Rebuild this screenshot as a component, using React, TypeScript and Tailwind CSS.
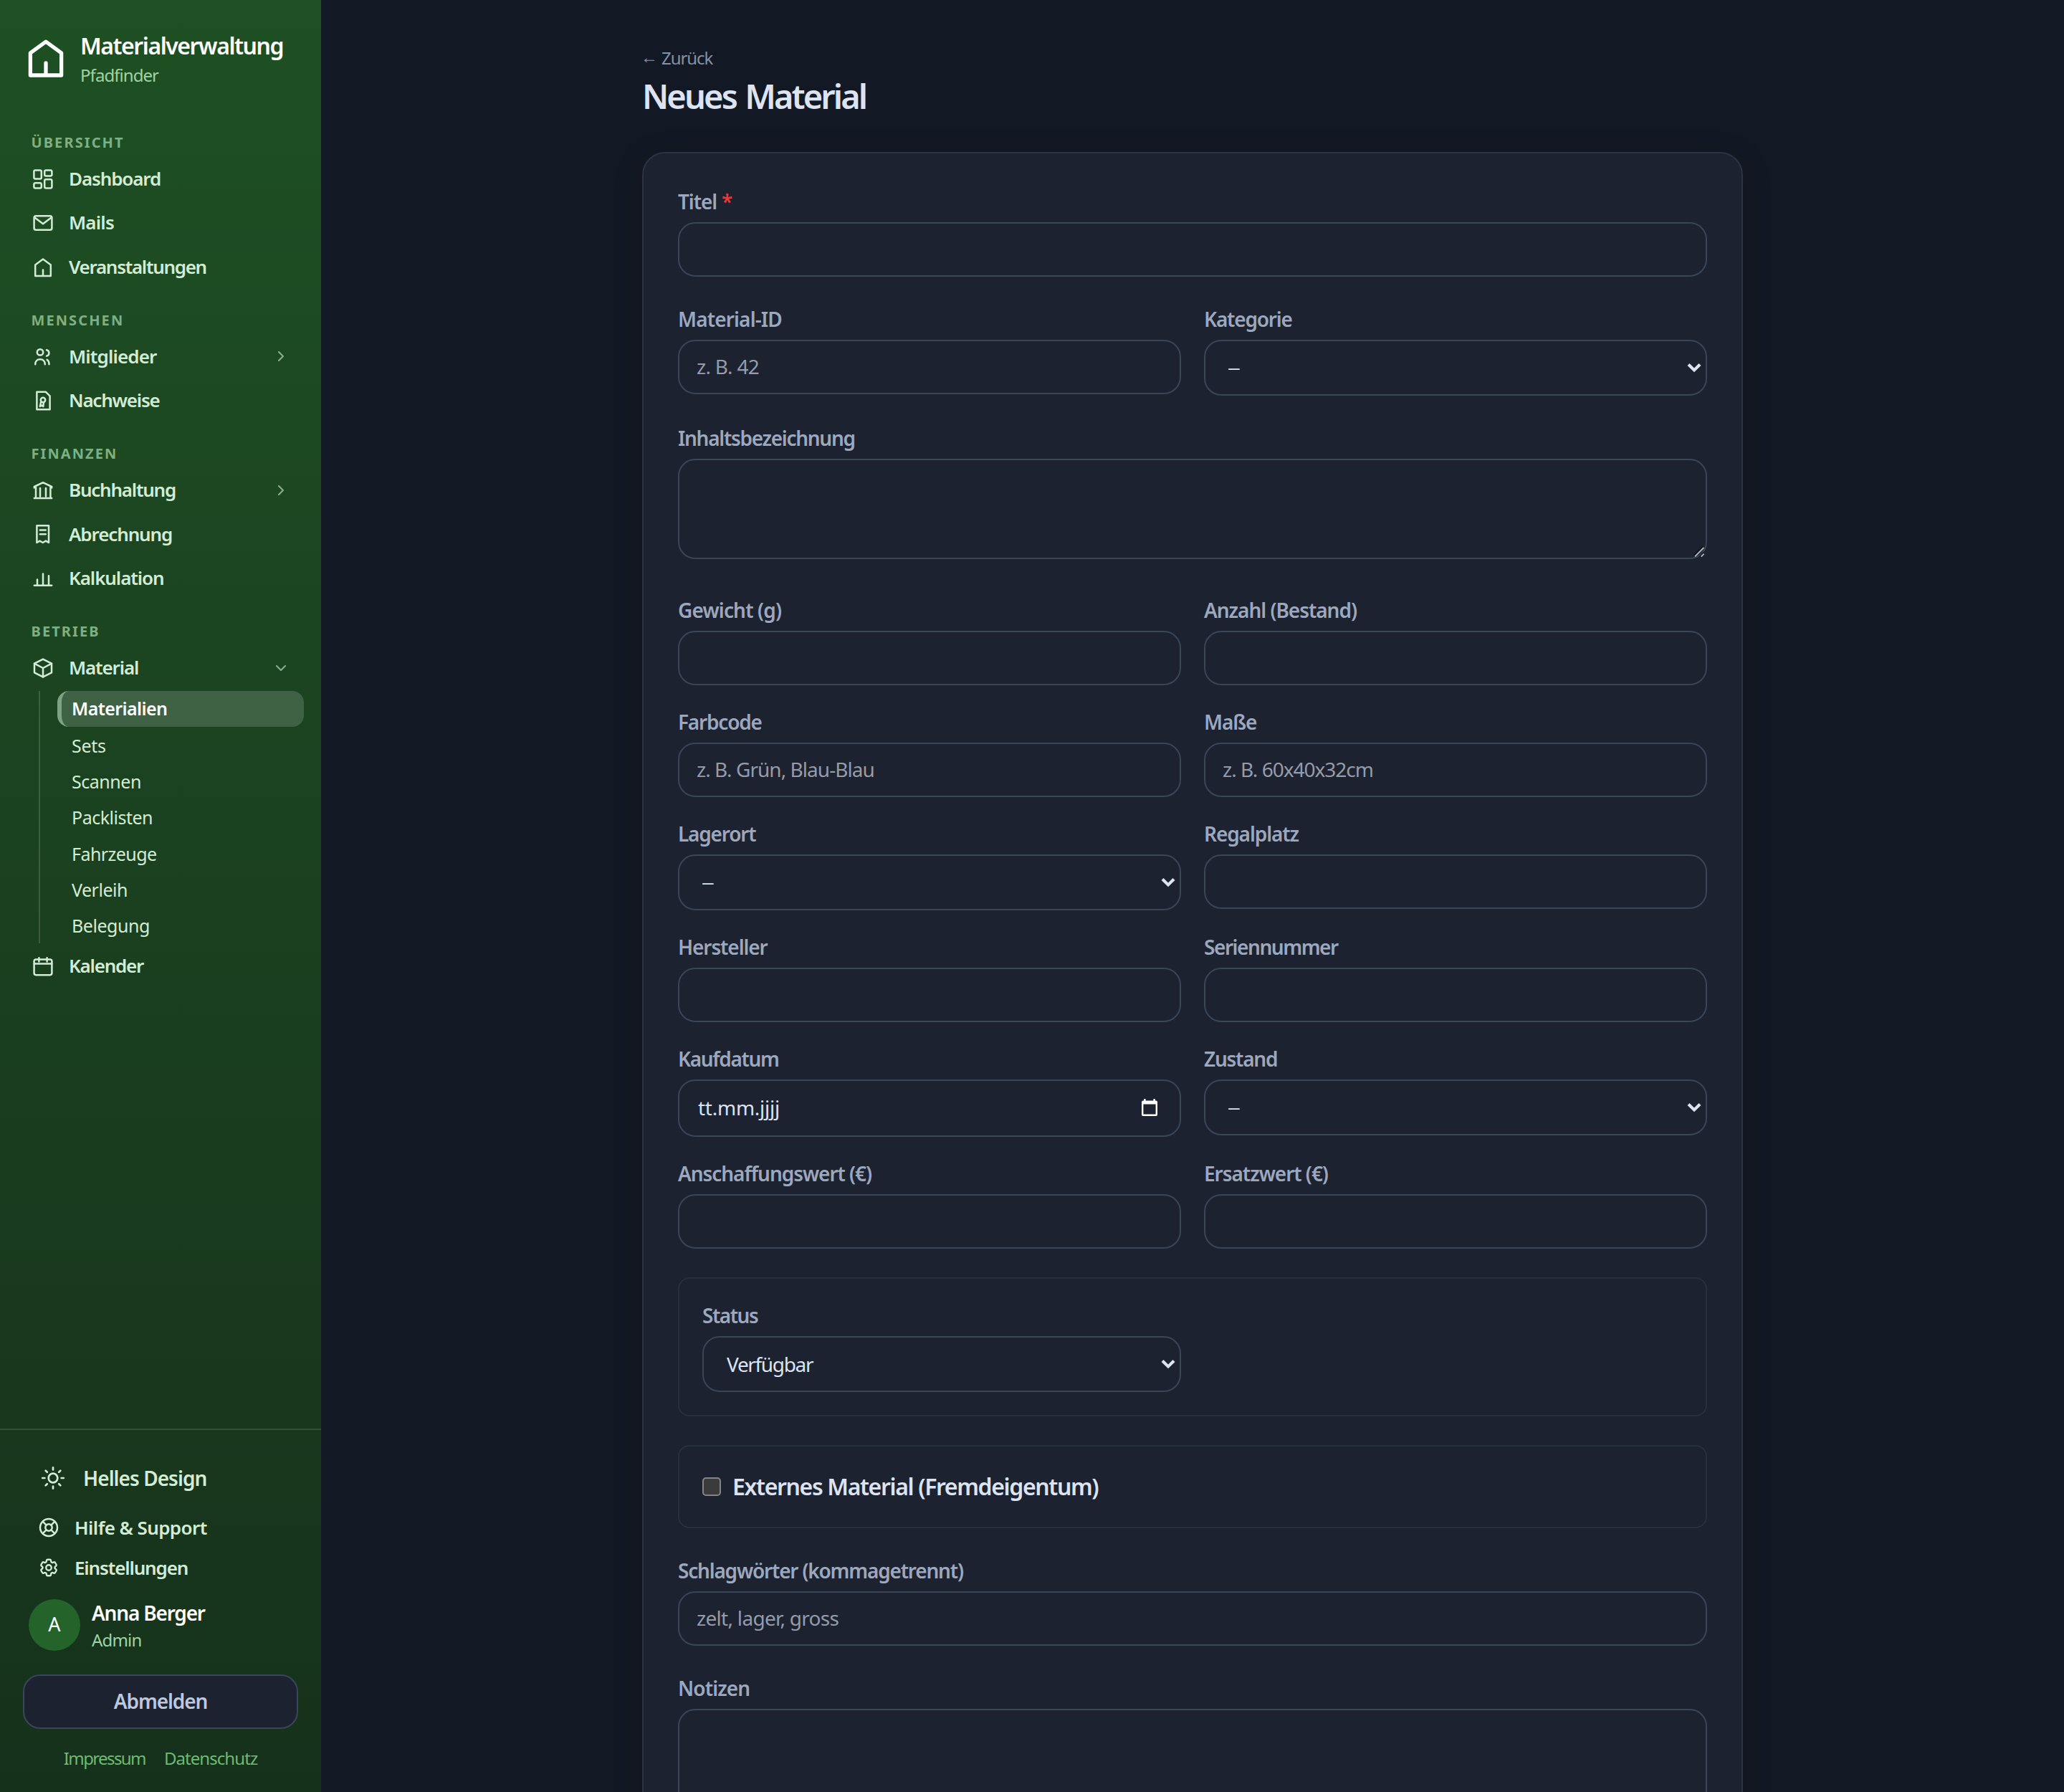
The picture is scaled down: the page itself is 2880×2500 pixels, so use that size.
import type { ReactNode } from "react";
import clsx from "clsx";
import { HiOutlineCog6Tooth } from "react-icons/hi2";

/* ---------- Icons ---------- */

type IconProps = { className?: string; stroke?: number; children?: ReactNode };

function Icon({ className = "size-8", stroke = 2.5, children }: IconProps) {
  return (
    <svg
      viewBox="2 2 32 32"
      className={clsx("shrink-0 overflow-visible", className)}
      fill="none"
      stroke="currentColor"
      strokeWidth={stroke}
      strokeLinecap="round"
      strokeLinejoin="round"
    >
      {children}
    </svg>
  );
}

const housePath = "M18 7.6 28.8 15.4V31H7.2V15.4ZM18 31V22.4";

const icons = {
  dashboard: (
    <>
      <rect x="5.4" y="5.6" width="10.4" height="12" rx="2" />
      <rect x="20.2" y="5.6" width="10.2" height="8" rx="2" />
      <rect x="20.2" y="18.2" width="10.2" height="12.2" rx="2" />
      <rect x="5.4" y="23.2" width="10.4" height="7.2" rx="2" />
    </>
  ),
  mail: (
    <>
      <rect x="5.6" y="8.2" width="24.8" height="19.6" rx="2.6" />
      <path d="M6.4 10.4 18 19.2 29.6 10.4" />
    </>
  ),
  house: <path d={housePath} />,
  people: (
    <>
      <circle cx="14" cy="12.4" r="4.2" />
      <path d="M7.2 29.2c0-4.4 2.8-7 6.8-7s6.8 2.6 6.8 7" />
      <path d="M23 9.2c2.1.5 3.4 2.2 3.4 4.2s-1.3 3.7-3.4 4.2" />
      <path d="M23.6 22.8c1.9 1.2 2.9 3.4 2.9 6.4" />
    </>
  ),
  certificate: (
    <>
      <path d="M9.4 5.8H22l5.6 5.6v18.8H9.4Z" />
      <circle cx="18" cy="17" r="3.2" />
      <path d="M15.2 19.4 13.8 26l2.3-1.4 2.2 1.4.7-5.6" />
    </>
  ),
  bank: (
    <>
      <path d="M5.8 14.4V13L18 7.2 30.2 13v1.4" />
      <path d="M8 14v14M14 15v11.6M22 15v11.6M28.4 14v14M5.8 29h24.4" />
    </>
  ),
  receipt: (
    <>
      <path d="M9.4 30V6.2h16.6V30l-4.1-2.4-4.2 2.4-4.2-2.4Z" />
      <path d="M13.8 12.4h8M13.8 18.2h8" />
    </>
  ),
  chart: <path d="M5.8 28.8h24.4M10 28v-7.4M18 28V12.6M26 28V15.2" />,
  cube: (
    <>
      <path d="M18 5.6 30 11.7v12.6L18 30.4 6 24.3V11.7Z" />
      <path d="M6 11.7 18 18l12-6.3M18 18v12.4" />
    </>
  ),
  calendar: (
    <>
      <rect x="5.6" y="8.4" width="24.8" height="21.8" rx="2.6" />
      <path d="M5.8 14.4h24.4M12.4 6.2v5.2M23.6 6.2v5.2" />
    </>
  ),
};

type IconName = keyof typeof icons;

function SunIcon() {
  return (
    <svg
      viewBox="-20 -20 40 40"
      className="size-10 shrink-0"
      fill="none"
      stroke="currentColor"
      strokeWidth="2.7"
      strokeLinecap="round"
    >
      <circle r="6.3" />
      <path d="M0-14.6v3M0 14.6v-3M-14.8 0h3.2M14.8 0h-3.2M-10.4-10.4l2.2 2.2M10.4-10.4 8.2-8.2M-10.4 10.4l2.2-2.2M10.4 10.4 8.2 8.2" />
    </svg>
  );
}

function LifebuoyIcon() {
  return (
    <svg
      viewBox="-16 -16 32 32"
      className="size-8 shrink-0"
      fill="none"
      stroke="currentColor"
      strokeWidth="2.5"
      strokeLinecap="round"
    >
      <circle r="12" />
      <circle r="4.7" />
      <path d="M-8.4-8.4-3.4-3.4M8.4-8.4 3.4-3.4M-8.4 8.4-3.4 3.4M8.4 8.4 3.4 3.4" />
    </svg>
  );
}

function NavChevron({ open }: { open?: boolean }) {
  return (
    <svg
      viewBox="0 0 16 16"
      className="size-4 shrink-0 overflow-visible opacity-60"
      fill="none"
      stroke="currentColor"
      strokeWidth="2.2"
      strokeLinecap="round"
      strokeLinejoin="round"
    >
      <path d={open ? "M2 5l6 6 6-6" : "M5 2l6 6-6 6"} />
    </svg>
  );
}

/* ---------- Sidebar ---------- */

type NavItem = {
  label: string;
  icon: IconName;
  tracking: string;
  chevron?: "open" | "closed";
  children?: { label: string; tracking: string; active?: boolean }[];
};

const NAV: { title: string; items: NavItem[] }[] = [
  {
    title: "Übersicht",
    items: [
      { label: "Dashboard", icon: "dashboard", tracking: "tracking-[-1.12px]" },
      { label: "Mails", icon: "mail", tracking: "tracking-[-0.8px]" },
      { label: "Veranstaltungen", icon: "house", tracking: "tracking-[-1.3px]" },
    ],
  },
  {
    title: "Menschen",
    items: [
      { label: "Mitglieder", icon: "people", tracking: "tracking-[-0.86px]", chevron: "closed" },
      { label: "Nachweise", icon: "certificate", tracking: "tracking-[-1.24px]" },
    ],
  },
  {
    title: "Finanzen",
    items: [
      { label: "Buchhaltung", icon: "bank", tracking: "tracking-[-1.23px]", chevron: "closed" },
      { label: "Abrechnung", icon: "receipt", tracking: "tracking-[-1.12px]" },
      { label: "Kalkulation", icon: "chart", tracking: "tracking-[-1.08px]" },
    ],
  },
  {
    title: "Betrieb",
    items: [
      {
        label: "Material",
        icon: "cube",
        tracking: "tracking-[-1.14px]",
        chevron: "open",
        children: [
          { label: "Materialien", tracking: "tracking-[-0.6px]", active: true },
          { label: "Sets", tracking: "tracking-[-0.3px]" },
          { label: "Scannen", tracking: "tracking-[-0.46px]" },
          { label: "Packlisten", tracking: "tracking-[-0.5px]" },
          { label: "Fahrzeuge", tracking: "tracking-[-0.56px]" },
          { label: "Verleih", tracking: "tracking-[-0.49px]" },
          { label: "Belegung", tracking: "tracking-[-0.45px]" },
        ],
      },
      { label: "Kalender", icon: "calendar", tracking: "tracking-[-1.24px]" },
    ],
  },
];

function NavRow({ item }: { item: NavItem }) {
  return (
    <>
      <div className="flex h-[61.3px] items-center gap-5 pr-12 pl-11 text-[26px] font-semibold">
        <Icon>{icons[item.icon]}</Icon>
        <span className={clsx("flex-1", item.tracking)}>{item.label}</span>
        {item.chevron && <NavChevron open={item.chevron === "open"} />}
      </div>
      {item.children && (
        <ul className="mt-0.5 mr-6 mb-px ml-[54px] border-l-2 border-white/15 pl-6 text-[25px]">
          {item.children.map((child) => (
            <li key={child.label} className="h-[50.3px]">
              <a
                className={clsx(
                  "flex h-[50px] items-center rounded-2xl border-l-[6px] pl-3.5",
                  child.tracking,
                  child.active
                    ? "border-[#7ea383] bg-white/16 font-semibold text-white"
                    : "border-transparent pt-0.5"
                )}
              >
                {child.label}
              </a>
            </li>
          ))}
        </ul>
      )}
    </>
  );
}

function Sidebar() {
  return (
    <aside className="flex h-full w-[448px] shrink-0 flex-col bg-linear-to-b from-[#1e5024] to-[#16311b] text-[#d3ecd5]">
      <div className="flex items-center gap-4 pt-11 pl-8">
        <Icon className="mb-1.5 size-16 text-white" stroke={2.65}>
          <path d={housePath} />
        </Icon>
        <div>
          <div className="text-[32px] leading-10 font-semibold tracking-[-1.45px] text-white">
            Materialverwaltung
          </div>
          <div className="mt-[5px] -mb-px text-[24px] leading-8 tracking-[-0.95px] text-[#a0d3a3]">
            Pfadfinder
          </div>
        </div>
      </div>

      <nav className="pt-[35px]">
        {NAV.map((section) => (
          <section key={section.title}>
            <h2 className="flex h-[63.9px] items-end pb-[7px] pl-[43.5px] text-[20px] leading-[27px] font-bold tracking-[2.1px] text-[#7fb082] uppercase">
              {section.title}
            </h2>
            {section.items.map((item) => (
              <NavRow key={item.label} item={item} />
            ))}
          </section>
        ))}
      </nav>

      <div className="mt-auto border-t-2 border-white/12 px-8 pt-[29px] pb-8">
        <div className="flex h-[75px] items-center gap-[21px] pl-[22px] text-[28px] font-semibold tracking-[-0.96px]">
          <SunIcon />
          <span className="pl-px">Helles Design</span>
        </div>
        <div className="mt-1 flex h-14 items-center gap-5 pl-5 text-[26px] font-semibold tracking-[-0.58px]">
          <LifebuoyIcon />
          Hilfe &amp; Support
        </div>
        <div className="flex h-14 items-center gap-5 pl-5 text-[26px] font-semibold tracking-[-1.14px]">
          <span className="flex w-8 justify-center">
            <HiOutlineCog6Tooth className="size-[30px]" strokeWidth={1.9} />
          </span>
          Einstellungen
        </div>
        <div className="mt-4 flex gap-4 pl-2">
          <div className="flex size-[72px] items-center justify-center rounded-full bg-[#24632a] pb-0.5 text-[27px] text-white">
            A
          </div>
          <div className="pt-0.5">
            <div className="text-[28px] leading-[34px] font-semibold tracking-[-1.2px] text-white">
              Anna Berger
            </div>
            <div className="mt-1 text-[24px] leading-[33px] tracking-[-0.81px] text-[#a0d3a3]">
              Admin
            </div>
          </div>
        </div>
        <button className="mt-8 flex h-[76px] w-full items-center justify-center rounded-3xl border-2 border-[#3b455a] bg-[#1c2230] pb-0.5 text-[28px] font-semibold tracking-[-1.13px] text-[#bfc7dc]">
          Abmelden
        </button>
        <div className="mt-[25px] -mb-px flex justify-center gap-[26px] text-[24px] leading-8 text-[#6cbb70]">
          <span className="tracking-[-1.6px]">Impressum</span>
          <span className="tracking-[-0.94px]">Datenschutz</span>
        </div>
      </div>
    </aside>
  );
}

/* ---------- Form ---------- */

const CONTROL =
  "block w-full rounded-3xl border-2 border-[#3b4558] bg-[#1c2230] px-6 text-[28px] text-[#dde3f0] outline-none";

type FieldProps = {
  label: string;
  tracking?: string;
  required?: boolean;
  children?: ReactNode;
};

function Field({ label, tracking = "tracking-[-1.1px]", required, children }: FieldProps) {
  return (
    <div>
      <label
        className={clsx(
          "mb-2.5 block text-[28px] leading-[38px] font-semibold text-[#9ca8be]",
          tracking
        )}
      >
        {label}
        {required && <span className="ml-[7px] text-[#e5383b]">*</span>}
      </label>
      {children}
    </div>
  );
}

type TextInputProps = { placeholder?: string; tracking?: string };

function TextInput({ placeholder, tracking = "tracking-[-0.7px]" }: TextInputProps) {
  return (
    <input
      type="text"
      placeholder={placeholder}
      className={clsx(CONTROL, "h-[76px] pb-0.5 placeholder:text-[#969ba8]", tracking)}
    />
  );
}

function SelectInput({ value }: { value?: string }) {
  return (
    <div className="relative">
      <select
        className={clsx(
          CONTROL,
          "h-[78px] appearance-none pl-8 tracking-[-1.35px]",
          !value && "font-['Liberation_Sans']"
        )}
      >
        <option>{value ?? "–"}</option>
      </select>
      <svg
        viewBox="0 0 20 14"
        className="pointer-events-none absolute top-8 right-2 h-3.5 w-5"
        fill="none"
        stroke="#dde3f0"
        strokeWidth="4.2"
      >
        <path d="M2 2.4 10 10.4 18 2.4" />
      </svg>
    </div>
  );
}

function DateInput() {
  return (
    <div className={clsx(CONTROL, "flex h-20 items-center justify-between pr-[31px] pl-[26px]")}>
      <span className="pb-0.5 tracking-[-0.25px]">tt.mm.jjjj</span>
      <svg viewBox="0 0 22 24" className="mb-0.5 h-6 w-[22px]" fill="#fff">
        <path
          fillRule="evenodd"
          d="M3 0h2.6v2.4h10.8V0H19v2.4h1a2 2 0 0 1 2 2V22a2 2 0 0 1-2 2H2a2 2 0 0 1-2-2V4.4a2 2 0 0 1 2-2h1ZM2.4 7.6V21.6H19.6V7.6Z"
        />
      </svg>
    </div>
  );
}

function TextArea({ className }: { className: string }) {
  return (
    <div className="relative">
      <textarea className={clsx(CONTROL, "resize-none", className)} />
      <svg
        viewBox="0 0 16 16"
        className="pointer-events-none absolute right-[3px] bottom-0.5 size-4"
        fill="none"
        strokeWidth="2"
      >
        <path d="M.6 13.4 13.4.6M9 14.4 14.4 9" stroke="#0b0e14" />
        <path d="M2 14.4 14.4 2M10.6 14.6 14.6 10.6" stroke="#b4b6ba" />
      </svg>
    </div>
  );
}

export default function App() {
  return (
    <div className="flex h-[2500px] w-[2880px] overflow-hidden bg-[#131924] font-['Noto_Sans','Open_Sans',sans-serif]">
      <Sidebar />

      <main className="flex-1 pt-[65px]">
        <div className="mx-auto w-[1536px]">
          <a className="flex gap-[5px] text-[24px] leading-8 text-[#8591a7]">
            <span className="-mt-0.5 -ml-0.5">←</span>
            <span className="tracking-[-1.06px]">Zurück</span>
          </a>
          <h1 className="mt-[5px] text-[47px] leading-[64px] font-semibold tracking-[-2.9px] text-[#dde3f0] [word-spacing:3px]">
            Neues Material
          </h1>

          <form className="mt-[46px] flex flex-col gap-10 rounded-[32px] border-2 border-[#2a3441] bg-[#1c2230] p-12 shadow-[0_8px_40px_rgba(20,10,20,0.2)]">
            <Field label="Titel" required>
              <TextInput />
            </Field>

            <div className="grid grid-cols-2 gap-8">
              <Field label="Material-ID" tracking="tracking-[-0.85px]">
                <TextInput placeholder="z. B. 42" />
              </Field>
              <Field label="Kategorie" tracking="tracking-[-1.2px]">
                <SelectInput />
              </Field>
            </div>

            <Field label="Inhaltsbezeichnung" tracking="tracking-[-1.3px]">
              <TextArea className="h-[140px]" />
            </Field>

            <div className="mt-3 grid grid-cols-2 gap-8">
              <Field label="Gewicht (g)" tracking="tracking-[-0.85px]">
                <TextInput />
              </Field>
              <Field label="Anzahl (Bestand)" tracking="tracking-[-1.04px]">
                <TextInput />
              </Field>
              <Field label="Farbcode" tracking="tracking-[-1.2px]">
                <TextInput placeholder="z. B. Grün, Blau-Blau" tracking="tracking-[-0.95px]" />
              </Field>
              <Field label="Maße">
                <TextInput placeholder="z. B. 60x40x32cm" tracking="tracking-[-1px]" />
              </Field>
              <Field label="Lagerort" tracking="tracking-[-1.2px]">
                <SelectInput />
              </Field>
              <Field label="Regalplatz">
                <TextInput />
              </Field>
              <Field label="Hersteller">
                <TextInput />
              </Field>
              <Field label="Seriennummer" tracking="tracking-[-1.45px]">
                <TextInput />
              </Field>
              <Field label="Kaufdatum" tracking="tracking-[-1.35px]">
                <DateInput />
              </Field>
              <Field label="Zustand" tracking="tracking-[-1.25px]">
                <SelectInput />
              </Field>
              <Field label="Anschaffungswert (€)" tracking="tracking-[-1.06px]">
                <TextInput />
              </Field>
              <Field label="Ersatzwert (€)" tracking="tracking-[-1.04px]">
                <TextInput />
              </Field>
            </div>

            <div className="grid grid-cols-2 gap-8 rounded-2xl border-2 border-[#27313e] p-8">
              <Field label="Status" tracking="tracking-[-1.48px]">
                <SelectInput value="Verfügbar" />
              </Field>
            </div>

            <div className="flex h-[116px] items-center gap-4 rounded-2xl border-2 border-[#27313e] px-8">
              <span className="size-[26px] rounded-[5px] border-2 border-[#858585] bg-[#3b3b3b]" />
              <span className="text-[32px] font-semibold tracking-[-1.37px] text-[#dde3f0]">
                Externes Material (Fremdeigentum)
              </span>
            </div>

            <Field label="Schlagwörter (kommagetrennt)" tracking="tracking-[-1.2px]">
              <TextInput placeholder="zelt, lager, gross" />
            </Field>

            <Field label="Notizen" tracking="tracking-[-0.9px]">
              <TextArea className="h-[180px]" />
            </Field>
          </form>
        </div>
      </main>
    </div>
  );
}
